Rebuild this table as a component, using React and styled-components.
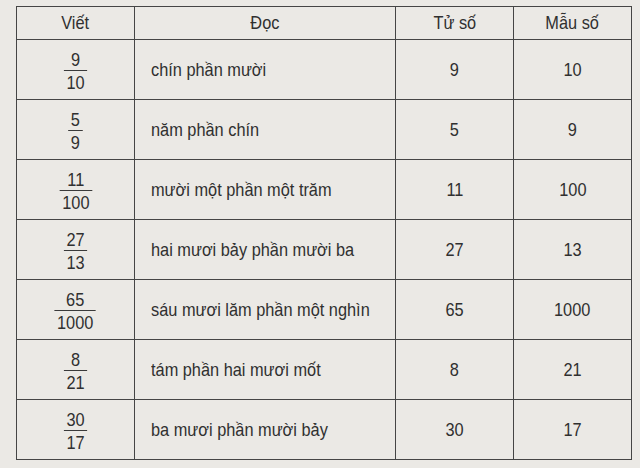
import React from "react";
import styled, { createGlobalStyle } from "styled-components";

const GlobalStyle = createGlobalStyle`
  html, body {
    margin: 0;
    padding: 0;
    background: #ebe9e5;
  }
  body {
    font-family: "Liberation Sans", Arial, sans-serif;
    color: #303030;
  }
`;

const rows = [
  { num: "9", den: "10", read: "chín phần mười" },
  { num: "5", den: "9", read: "năm phần chín" },
  { num: "11", den: "100", read: "mười một phần một trăm" },
  { num: "27", den: "13", read: "hai mươi bảy phần mười ba" },
  { num: "65", den: "1000", read: "sáu mươi lăm phần một nghìn" },
  { num: "8", den: "21", read: "tám phần hai mươi mốt" },
  { num: "30", den: "17", read: "ba mươi phần mười bảy" },
];

const Page = styled.div`
  padding: 6px 0 0 16px;
`;

const Table = styled.table`
  border-collapse: collapse;
  table-layout: fixed;
  width: 612px;
  border: 1px solid #454545;
  font-size: 19px;
`;

const HeadCell = styled.th`
  width: ${(p) => p.$w}px;
  height: 32px;
  padding: 0;
  font-weight: normal;
  text-align: center;
  border: 1px solid #454545;
`;

const Cell = styled.td`
  height: 59px;
  padding: ${(p) => (p.$left ? "0 0 0 16px" : "0")};
  text-align: ${(p) => (p.$left ? "left" : "center")};
  vertical-align: middle;
  white-space: nowrap;
  border: 1px solid #454545;
`;

/* the printed face is a condensed grotesque, so squeeze Arial a bit */
const Label = styled.span`
  display: inline-block;
  transform: scaleX(0.86);
  transform-origin: ${(p) => (p.$left ? "left center" : "center")};
`;

const Fraction = styled.span`
  display: inline-flex;
  flex-direction: column;
  align-items: center;
  line-height: 19px;
  padding-top: 2px;
  transform: scaleX(0.86);
`;

const Num = styled.span`
  display: block;
  padding: 0 3px 1px;
`;

const Den = styled.span`
  display: block;
  padding: 2px 3px 0;
  border-top: 1px solid #3a3a3a;
`;

export default function App() {
  return (
    <Page>
      <GlobalStyle />
      <Table>
        <thead>
          <tr>
            <HeadCell $w={117}><Label>Viết</Label></HeadCell>
            <HeadCell $w={260}><Label>Đọc</Label></HeadCell>
            <HeadCell $w={117}><Label>Tử số</Label></HeadCell>
            <HeadCell $w={117}><Label>Mẫu số</Label></HeadCell>
          </tr>
        </thead>
        <tbody>
          {rows.map((r) => (
            <tr key={r.den + r.num}>
              <Cell>
                <Fraction>
                  <Num>{r.num}</Num>
                  <Den>{r.den}</Den>
                </Fraction>
              </Cell>
              <Cell $left>
                <Label $left>{r.read}</Label>
              </Cell>
              <Cell><Label>{r.num}</Label></Cell>
              <Cell><Label>{r.den}</Label></Cell>
            </tr>
          ))}
        </tbody>
      </Table>
    </Page>
  );
}
